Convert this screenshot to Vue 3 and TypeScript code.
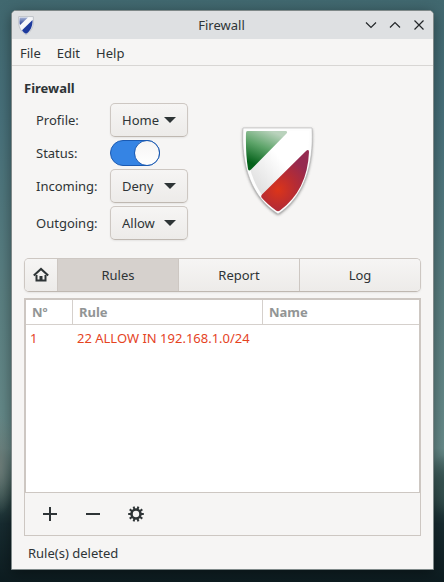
<script setup lang="ts">
import { ref } from 'vue'

type Policy = 'Allow' | 'Deny' | 'Reject'

interface Rule {
  id: number
  text: string
  name: string
}

const profiles = ['Home', 'Office', 'Public']
const policies: Policy[] = ['Allow', 'Deny', 'Reject']
const menus = ['File', 'Edit', 'Help']
const tabs = ['Rules', 'Report', 'Log']

const profile = ref('Home')
const enabled = ref(true)
const incoming = ref<Policy>('Deny')
const outgoing = ref<Policy>('Allow')
const activeTab = ref('Rules')
const status = ref('Rule(s) deleted')
const rules = ref<Rule[]>([{ id: 1, text: '22 ALLOW IN 192.168.1.0/24', name: '' }])

// Ten gear teeth, one every 36 degrees
const teeth = Array.from({ length: 10 }, (_, i) => i * 36)
</script>

<template>
  <div class="desktop">
    <section class="window">
      <header class="titlebar">
        <svg class="app-icon" viewBox="0 0 80 96" aria-hidden="true">
          <defs>
            <linearGradient id="blueTop" x1="0" y1="0" x2="0" y2="1">
              <stop offset="0" stop-color="#a9b6d6" />
              <stop offset="1" stop-color="#1b3591" />
            </linearGradient>
          </defs>
          <path d="M3 3H77V30C77 62 60 83 40 94C20 83 3 62 3 30Z" fill="#f6f7fa" stroke="#b4b8c0" stroke-width="4" />
          <path d="M8 7H50L10 46C8 40 7 34 7 26Z" fill="url(#blueTop)" />
          <path d="M73 20C74 55 60 79 40 90C34 87 25 80 20 72Z" fill="#1d3a9c" />
        </svg>
        <h1 class="title">Firewall</h1>
        <div class="controls">
          <button type="button" aria-label="Minimize">
            <svg viewBox="0 0 12 12"><path d="M1 3.5L6 8.5L11 3.5" /></svg>
          </button>
          <button type="button" aria-label="Maximize">
            <svg viewBox="0 0 12 12"><path d="M1 8.5L6 3.5L11 8.5" /></svg>
          </button>
          <button type="button" aria-label="Close">
            <svg viewBox="0 0 12 12"><path d="M1.5 1.5L10.5 10.5M10.5 1.5L1.5 10.5" /></svg>
          </button>
        </div>
      </header>

      <nav class="menubar">
        <button v-for="menu in menus" :key="menu" type="button">{{ menu }}</button>
      </nav>

      <main class="content">
        <h2 class="heading">Firewall</h2>

        <div class="overview">
          <form class="settings" @submit.prevent>
            <label for="profile">Profile:</label>
            <span class="combo">
              <select id="profile" v-model="profile">
                <option v-for="p in profiles" :key="p">{{ p }}</option>
              </select>
              <svg viewBox="0 0 12 6" aria-hidden="true"><path d="M0 0H12L6 6Z" /></svg>
            </span>

            <label for="status">Status:</label>
            <input id="status" v-model="enabled" class="switch" type="checkbox" role="switch" />

            <label for="incoming">Incoming:</label>
            <span class="combo">
              <select id="incoming" v-model="incoming">
                <option v-for="p in policies" :key="p">{{ p }}</option>
              </select>
              <svg viewBox="0 0 12 6" aria-hidden="true"><path d="M0 0H12L6 6Z" /></svg>
            </span>

            <label for="outgoing">Outgoing:</label>
            <span class="combo">
              <select id="outgoing" v-model="outgoing">
                <option v-for="p in policies" :key="p">{{ p }}</option>
              </select>
              <svg viewBox="0 0 12 6" aria-hidden="true"><path d="M0 0H12L6 6Z" /></svg>
            </span>
          </form>

          <svg class="shield" viewBox="0 0 80 96" aria-hidden="true">
            <defs>
              <linearGradient id="base" x1="0" y1="1" x2="1" y2="0">
                <stop offset="0.2" stop-color="#dedede" />
                <stop offset="0.6" stop-color="#ffffff" />
              </linearGradient>
              <linearGradient id="green" x1="0.6" y1="0" x2="0.15" y2="1">
                <stop offset="0" stop-color="#b9d2bc" />
                <stop offset="0.4" stop-color="#5fa56b" />
                <stop offset="0.85" stop-color="#04611a" />
              </linearGradient>
              <radialGradient id="red" gradientUnits="userSpaceOnUse" cx="41" cy="66" r="34">
                <stop offset="0" stop-color="#dc3519" />
                <stop offset="0.5" stop-color="#b82c32" />
                <stop offset="1" stop-color="#952a50" />
              </radialGradient>
              <filter id="soft" x="-20%" y="-20%" width="140%" height="140%">
                <feGaussianBlur stdDeviation="1.5" />
              </filter>
            </defs>
            <path d="M6 5H75C77 42 67 74 41 91C14 74 4 42 6 5Z" fill="#555555" opacity="0.75" filter="url(#soft)" />
            <path d="M6 4H75C77 41 67 73 41 90C14 73 4 41 6 4Z" fill="#fdfdfd" stroke="#b5b5b5" stroke-width="0.6" />
            <path d="M9 7H72C73 40 64 70 41 87C17 70 8 40 9 7Z" fill="url(#base)" />
            <path d="M10.500 7H49Q51 7.500 49.500 9.500L14 45.500Q11.500 47.500 11 45Q8.500 30 9 9Q9 7 10.500 7Z" fill="url(#green)" />
            <path d="M68.500 27.500Q72 24.500 72 28Q70.500 66 43 86.500Q41 88 39 86.500Q29 79 24.500 73.500Q23.500 72 25 70.500Z" fill="url(#red)" />
          </svg>
        </div>

        <div class="tabs" role="tablist">
          <button class="home" type="button" aria-label="Home">
            <svg viewBox="0 0 16 16" aria-hidden="true">
              <path d="M0.800 8.600L8 1.900L15.200 8.600" fill="none" stroke="currentColor" stroke-width="2" />
              <path d="M3.500 8V13.500H12.500V8" fill="none" stroke="currentColor" stroke-width="2" />
              <path d="M6.500 14V9H9.500V14Z" fill="currentColor" />
            </svg>
          </button>
          <button
            v-for="tab in tabs"
            :key="tab"
            type="button"
            role="tab"
            :aria-selected="activeTab === tab"
            :class="{ active: activeTab === tab }"
            @click="activeTab = tab"
          >
            {{ tab }}
          </button>
        </div>

        <div class="panel">
          <div class="list">
            <table>
              <colgroup>
                <col class="col-no" />
                <col class="col-rule" />
                <col />
              </colgroup>
              <thead>
                <tr>
                  <th scope="col">Nº</th>
                  <th scope="col">Rule</th>
                  <th scope="col">Name</th>
                </tr>
              </thead>
              <tbody>
                <tr v-for="rule in rules" :key="rule.id">
                  <td>{{ rule.id }}</td>
                  <td>{{ rule.text }}</td>
                  <td>{{ rule.name }}</td>
                </tr>
              </tbody>
            </table>
          </div>
          <div class="toolbar">
            <button type="button" aria-label="Add rule">
              <svg viewBox="0 0 16 16"><path d="M7 1H9V7H15V9H9V15H7V9H1V7H7Z" /></svg>
            </button>
            <button type="button" aria-label="Remove rule">
              <svg viewBox="0 0 16 16"><path d="M1 7H15V9H1Z" /></svg>
            </button>
            <button type="button" aria-label="Rule settings">
              <svg viewBox="0 0 16 16">
                <circle cx="8" cy="8" r="4.500" fill="none" stroke="currentColor" stroke-width="2.600" />
                <path v-for="a in teeth" :key="a" d="M7 0.200H9V3H7Z" :transform="`rotate(${a + 18} 8 8)`" />
              </svg>
            </button>
          </div>
        </div>
      </main>

      <footer class="statusbar">{{ status }}</footer>
    </section>
  </div>
</template>

<style>
body {
  margin: 0;
}
</style>

<style scoped>
.desktop {
  box-sizing: border-box;
  display: flex;
  min-height: 100vh;
  padding: 10px 10px 12px 11px;
  background:
    radial-gradient(ellipse 16px 50px at 0 465px, #6d7c78 0, transparent 100%),
    radial-gradient(ellipse 18px 30px at 100% 485px, #35514f 0, transparent 100%),
    linear-gradient(#41686f 0, #47707a 20%, #5a7f81 50%, #668a89 77%, #35514f 84%, #172b30 90%, #0d1c20 100%);
  color: #2e3436;
  font-family: 'Noto Sans', sans-serif;
  font-size: 13px;
  line-height: 20px;
}

button,
select {
  font: inherit;
  color: #2e3436;
}

.window {
  box-sizing: border-box;
  display: flex;
  flex: 1;
  flex-direction: column;
  min-width: 0;
  border: 1px solid #7f8989;
  border-radius: 5px 5px 0 0;
  background: #f6f5f4;
  box-shadow: 0 3px 14px rgba(0, 0, 0, 0.4);
}

.titlebar {
  display: grid;
  grid-template-columns: 1fr auto 1fr;
  align-items: center;
  height: 28px;
  padding: 0 8px 0 6px;
  border-radius: 4px 4px 0 0;
  background: #dee0e2;
}

.app-icon {
  width: 16px;
  height: 19px;
}

.title {
  margin: 0;
  font-size: 13px;
  font-weight: 400;
}

.controls {
  display: flex;
  justify-content: flex-end;
  gap: 12px;
}

.controls button {
  display: flex;
  padding: 0;
  border: 0;
  background: none;
}

.controls svg {
  width: 12px;
  height: 12px;
  fill: none;
  stroke: #232629;
  stroke-width: 1.2;
}

.menubar {
  display: flex;
  gap: 16px;
  height: 26px;
  padding: 0 8px;
  border-bottom: 1px solid #d8d6d4;
}

.menubar button {
  padding: 2px 0 0;
  border: 0;
  background: none;
}

.content {
  display: flex;
  flex: 1;
  flex-direction: column;
  padding: 12px 12px 0;
}

.heading {
  margin: 0 0 5px;
  font-size: 13px;
  font-weight: 700;
}

.overview {
  display: flex;
  align-items: center;
  gap: 49px;
  padding-left: 12px;
}

.settings {
  display: grid;
  grid-template-columns: 62px 78px;
  gap: 3px 12px;
  align-items: center;
}

.combo {
  display: grid;
  align-items: center;
}

.combo select {
  box-sizing: border-box;
  grid-area: 1 / 1;
  width: 100%;
  height: 34px;
  margin: 0;
  padding: 0 24px 0 11px;
  border: 1px solid #cdc7c2;
  border-bottom-color: #bfb8b1;
  border-radius: 5px;
  background: linear-gradient(#f6f5f4, #edebe9);
  box-shadow: 0 1px 2px rgba(0, 0, 0, 0.07);
  appearance: none;
}

.combo svg {
  grid-area: 1 / 1;
  justify-self: end;
  width: 12px;
  height: 6px;
  margin-right: 12px;
  fill: #2e3436;
  pointer-events: none;
}

.switch {
  box-sizing: border-box;
  display: flex;
  width: 50px;
  height: 26px;
  margin: 0;
  border: 1px solid #cdc7c2;
  border-radius: 13px;
  background: #e1dedb;
  appearance: none;
}

.switch::before {
  content: '';
  box-sizing: border-box;
  width: 26px;
  height: 26px;
  margin: -1px;
  border: 1px solid #cdc7c2;
  border-radius: 50%;
  background: linear-gradient(#f6f5f4, #ffffff);
}

.switch:checked {
  justify-content: flex-end;
  border-color: #1b5ab2;
  background: #3584e4;
}

.switch:checked::before {
  border-color: #1b5ab2;
}

.shield {
  width: 80px;
  height: 96px;
}

.tabs {
  display: flex;
  box-sizing: border-box;
  height: 34px;
  margin-top: 18px;
  overflow: hidden;
  border: 1px solid #cdc7c2;
  border-bottom-color: #bfb8b1;
  border-radius: 5px;
  box-shadow: 0 1px 2px rgba(0, 0, 0, 0.07);
}

.tabs button {
  flex: 1;
  padding: 0;
  border: 0;
  border-left: 1px solid #cdc7c2;
  background: linear-gradient(#f6f5f4, #edebe9);
}

.tabs .home {
  display: flex;
  flex: 0 0 32px;
  align-items: center;
  justify-content: center;
  border-left: 0;
}

.home svg {
  width: 16px;
  height: 16px;
}

.tabs .active {
  background: #d6d1cd;
}

.panel {
  display: flex;
  flex: 1;
  flex-direction: column;
  margin-top: 6px;
  border: 1px solid #cdc7c2;
}

.list {
  flex: 1;
  border: 1px solid #cdc7c2;
  background: #ffffff;
}

table {
  width: 100%;
  border-collapse: separate;
  border-spacing: 0;
  table-layout: fixed;
}

.col-no {
  width: 47px;
}

.col-rule {
  width: 190px;
}

th {
  height: 24px;
  padding: 0 6px;
  border-right: 1px solid #d5d0cc;
  border-bottom: 1px solid #d5d0cc;
  color: #929595;
  font-weight: 700;
  text-align: left;
}

th:last-child {
  border-right: 0;
}

td {
  height: 26px;
  padding: 0 4px;
  color: #e5441f;
  white-space: nowrap;
}

.toolbar {
  display: flex;
  align-items: center;
  gap: 9px;
  height: 42px;
  padding-left: 8px;
}

.toolbar button {
  display: flex;
  align-items: center;
  justify-content: center;
  width: 34px;
  height: 34px;
  padding: 0;
  border: 0;
  background: none;
}

.toolbar svg {
  width: 16px;
  height: 16px;
  fill: currentColor;
}

.statusbar {
  height: 20px;
  padding: 7px 16px 6px;
}
</style>
